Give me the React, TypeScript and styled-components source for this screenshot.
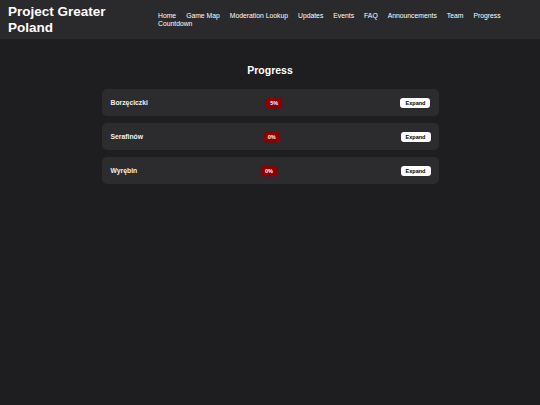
import React from "react";
import styled, { createGlobalStyle } from "styled-components";

type Region = {
  name: string;
  percent: number;
}

const regions: Region[] = [
  { name: "Borzęciczki", percent: 5 },
  { name: "Serafinów", percent: 0 },
  { name: "Wyrębin", percent: 0 },
];

const navLinks = [
  "Home",
  "Game Map",
  "Moderation Lookup",
  "Updates",
  "Events",
  "FAQ",
  "Announcements",
  "Team",
  "Progress",
  "Countdown",
];

const GlobalStyle = createGlobalStyle`
  html, body {
    margin: 0;
    padding: 0;
    background-color: #1e1e20;
    font-family: "Liberation Sans", Arial, sans-serif;
    color: #ffffff;
  }
  #root {
    min-height: 405px;
  }
`

const Header = styled.header`
  display: flex;
  align-items: center;
  height: 39px;
  padding: 0 8px;
  background-color: #2a2a2c;
`

const Title = styled.h1`
  flex: 0 0 142px;
  margin: 0 8px 0 0;
  font-size: 13.5px;
  line-height: 15.5px;
  font-weight: bold;
  color: #ffffff;
`

const Nav = styled.nav`
  flex: 1;
  display: flex;
  flex-wrap: wrap;
  column-gap: 10px;
`

const NavLink = styled.a`
  font-size: 6.8px;
  line-height: 7.5px;
  color: #ffffff;
  text-decoration: none;
`

const Main = styled.main`
  width: 337px;
  margin: 0 auto;
  padding-top: 25px;
`

const Heading = styled.h2`
  margin: 0 0 12px;
  text-align: center;
  font-size: 10.5px;
  line-height: 13px;
  font-weight: bold;
`

const List = styled.div`
  display: flex;
  flex-direction: column;
  gap: 6.7px;
`

const Card = styled.div`
  display: flex;
  align-items: center;
  justify-content: space-between;
  height: 27.3px;
  padding: 0 8px 0 9px;
  background-color: #2c2c2e;
  border-radius: 5px;
`

const Name = styled.span`
  font-size: 6.8px;
  font-weight: bold;
  color: #f0f0f0;
`

const Badge = styled.span`
  padding: 2px 4px;
  font-size: 5.5px;
  font-weight: bold;
  color: #ffffff;
  background-color: #8b0000;
  border-radius: 3px;
  box-shadow: 0 0 2px #8b0000;
`

const ExpandButton = styled.button`
  width: 30px;
  height: 10px;
  padding: 0;
  border: none;
  border-radius: 3px;
  background-color: #ffffff;
  color: #000000;
  font-family: "Liberation Sans", Arial, sans-serif;
  font-size: 5.5px;
  font-weight: bold;
`

const App = () => {
  return (
    <>
      <GlobalStyle />
      <Header>
        <Title>Project Greater Poland</Title>
        <Nav>
          {navLinks.map((link) => (
            <NavLink key={link} href="#">{link}</NavLink>
          ))}
        </Nav>
      </Header>
      <Main>
        <Heading>Progress</Heading>
        <List>
          {regions.map((region) => (
            <Card key={region.name}>
              <Name>{region.name}</Name>
              <Badge>{region.percent}%</Badge>
              <ExpandButton>Expand</ExpandButton>
            </Card>
          ))}
        </List>
      </Main>
    </>
  )
}

export default App;
